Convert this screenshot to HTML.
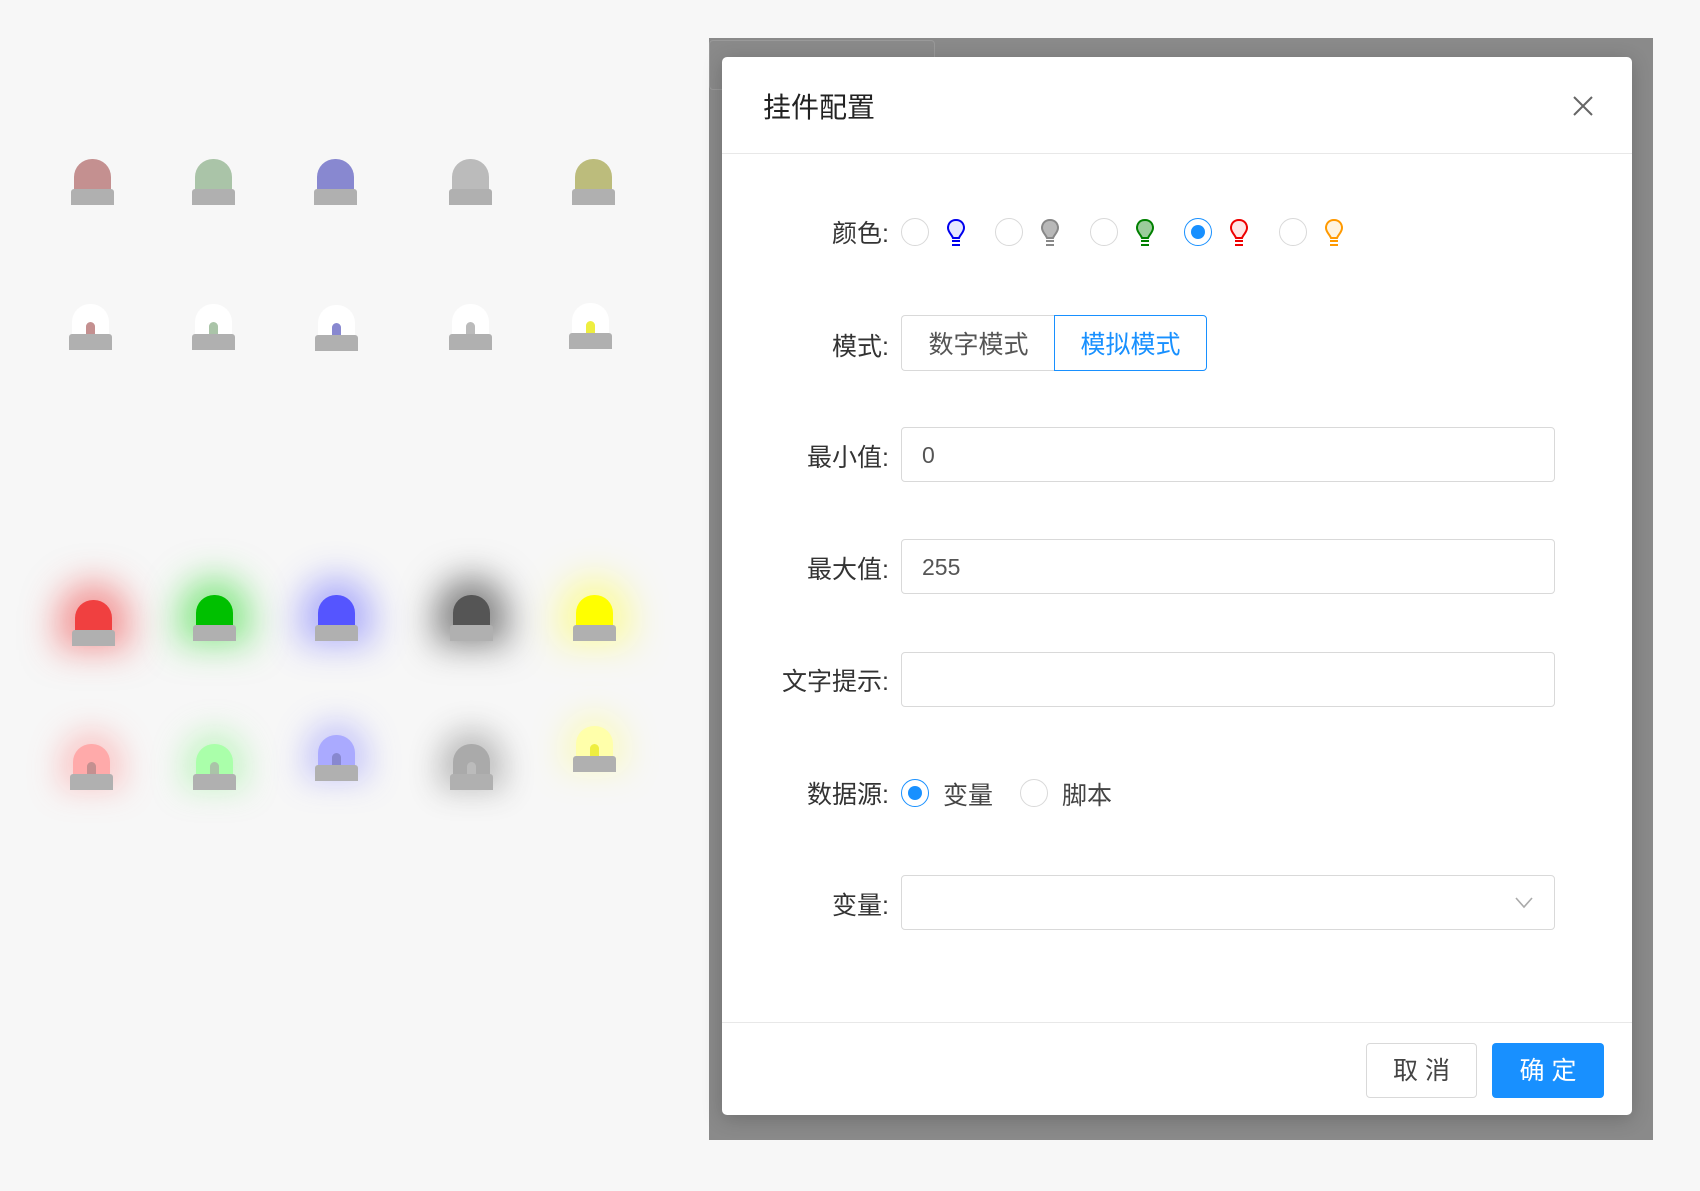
<!DOCTYPE html>
<html><head><meta charset="utf-8"><style>
*{margin:0;padding:0;box-sizing:border-box}
body{width:1700px;height:1191px;background:#f7f7f7;position:relative;overflow:hidden;font-family:"Liberation Sans","Noto Sans CJK SC",sans-serif;color:#333}
.l{position:absolute;width:43px;height:46px}
.l .d{position:absolute;left:3px;top:0;width:37px;height:32px;border-radius:18px 18px 0 0}
.l .b{position:absolute;left:0;top:30px;width:43px;height:16px;background:#b0b0b0;border-radius:3px 3px 0 0}
.l .s{position:absolute;left:17px;top:18px;width:9px;height:12px;border-radius:5px 5px 0 0}
.ov{position:absolute;left:709px;top:38px;width:944px;height:1102px;background:#8a8a8a}
.modal{position:absolute;left:722px;top:57px;width:910px;height:1058px;background:#fff;border-radius:5px;box-shadow:0 4px 20px rgba(0,0,0,.2)}
.lab{position:absolute;right:calc(1700px - 889px);font-size:25px;color:#333;text-align:right;white-space:nowrap}
.inp{position:absolute;left:901px;width:654px;height:55px;border:1px solid #d9d9d9;border-radius:4px;font-size:23px;color:#555;padding:14px 20px;background:#fff}
.rad{position:absolute;width:28px;height:28px;border:1px solid #d9d9d9;border-radius:50%;background:#fff}
.rad.on{border-color:#1890ff}
.rad.on::after{content:"";position:absolute;left:6px;top:6px;width:14px;height:14px;border-radius:50%;background:#1890ff}
.bulb{position:absolute;width:22px;height:30px}
</style></head><body>

<div class="l" style="left:71px;top:159px"><div class="d" style="background:#c49090"></div><div class="b"></div></div>
<div class="l" style="left:192px;top:159px"><div class="d" style="background:#aac4a8"></div><div class="b"></div></div>
<div class="l" style="left:314px;top:159px"><div class="d" style="background:#8888d0"></div><div class="b"></div></div>
<div class="l" style="left:449px;top:159px"><div class="d" style="background:#bbb"></div><div class="b"></div></div>
<div class="l" style="left:572px;top:159px"><div class="d" style="background:#bcbc7c"></div><div class="b"></div></div>

<div class="l" style="left:69px;top:304px"><div class="d" style="background:#fff"></div><div class="s" style="background:#c49090"></div><div class="b"></div></div>
<div class="l" style="left:192px;top:304px"><div class="d" style="background:#fff"></div><div class="s" style="background:#aac4a8"></div><div class="b"></div></div>
<div class="l" style="left:315px;top:305px"><div class="d" style="background:#fff"></div><div class="s" style="background:#8888d0"></div><div class="b"></div></div>
<div class="l" style="left:449px;top:304px"><div class="d" style="background:#fff"></div><div class="s" style="background:#bbb"></div><div class="b"></div></div>
<div class="l" style="left:569px;top:303px"><div class="d" style="background:#fff"></div><div class="s" style="background:#eeee40"></div><div class="b"></div></div>

<div class="l" style="left:72px;top:600px"><div class="d" style="background:#f04040;box-shadow:0 0 34px 18px rgba(240,60,60,.5)"></div><div class="b"></div></div>
<div class="l" style="left:193px;top:595px"><div class="d" style="background:#00c000;box-shadow:0 0 34px 18px rgba(40,220,40,.5)"></div><div class="b"></div></div>
<div class="l" style="left:315px;top:595px"><div class="d" style="background:#5555ff;box-shadow:0 0 34px 18px rgba(90,90,255,.45)"></div><div class="b"></div></div>
<div class="l" style="left:450px;top:595px"><div class="d" style="background:#555;box-shadow:0 0 34px 18px rgba(40,40,40,.55)"></div><div class="b"></div></div>
<div class="l" style="left:573px;top:595px"><div class="d" style="background:#ffff00;box-shadow:0 0 34px 18px rgba(255,255,80,.5)"></div><div class="b"></div></div>

<div class="l" style="left:70px;top:744px"><div class="d" style="background:#ffaaaa;box-shadow:0 0 30px 14px rgba(255,120,120,.35)"></div><div class="s" style="background:#c49090"></div><div class="b"></div></div>
<div class="l" style="left:193px;top:744px"><div class="d" style="background:#aaffaa;box-shadow:0 0 30px 14px rgba(120,240,120,.35)"></div><div class="s" style="background:#aac4a8"></div><div class="b"></div></div>
<div class="l" style="left:315px;top:735px"><div class="d" style="background:#aaaaff;box-shadow:0 0 30px 14px rgba(120,120,255,.35)"></div><div class="s" style="background:#8888d0"></div><div class="b"></div></div>
<div class="l" style="left:450px;top:744px"><div class="d" style="background:#aaa;box-shadow:0 0 30px 14px rgba(60,60,60,.3)"></div><div class="s" style="background:#bbb"></div><div class="b"></div></div>
<div class="l" style="left:573px;top:726px"><div class="d" style="background:#ffffaa;box-shadow:0 0 30px 14px rgba(255,255,120,.35)"></div><div class="s" style="background:#eeee40"></div><div class="b"></div></div>

<div class="ov"></div>
<div style="position:absolute;left:709px;top:40px;width:226px;height:50px;border:1px solid #999;border-radius:4px"></div>

<div class="modal">
  <div style="position:absolute;left:41px;top:29px;font-size:28px;color:#222">挂件配置</div>
  <svg style="position:absolute;left:850px;top:38px" width="22" height="22" viewBox="0 0 22 22"><path d="M2 2L20 20M20 2L2 20" stroke="#666" stroke-width="2" fill="none"/></svg>
  <div style="position:absolute;left:0;top:96px;width:100%;height:1px;background:#e8e8e8"></div>
  <div style="position:absolute;left:0;top:965px;width:100%;height:1px;background:#e8e8e8"></div>
</div>

<div class="lab" style="top:214px">颜色:</div>
<div class="rad" style="left:901px;top:218px"></div>
<div class="rad" style="left:995px;top:218px"></div>
<div class="rad" style="left:1090px;top:218px"></div>
<div class="rad on" style="left:1184px;top:218px"></div>
<div class="rad" style="left:1279px;top:218px"></div>
<svg class="bulb" style="left:945px;top:218px" viewBox="0 0 22 30"><path d="M11 2C5.5 2 3 6 3 10c0 4 4 7 5 10h6c1-3 5-6 5-10 0-4-2.5-8-8-8z" fill="#e6e8ff" stroke="#0000ee" stroke-width="2"/><path d="M7 23h8M7 27h8" stroke="#0000ee" stroke-width="2"/></svg>
<svg class="bulb" style="left:1039px;top:218px" viewBox="0 0 22 30"><path d="M11 2C5.5 2 3 6 3 10c0 4 4 7 5 10h6c1-3 5-6 5-10 0-4-2.5-8-8-8z" fill="#b8b8b8" stroke="#888" stroke-width="2"/><path d="M7 23h8M7 27h8" stroke="#888" stroke-width="2"/></svg>
<svg class="bulb" style="left:1134px;top:218px" viewBox="0 0 22 30"><path d="M11 2C5.5 2 3 6 3 10c0 4 4 7 5 10h6c1-3 5-6 5-10 0-4-2.5-8-8-8z" fill="#9ccc9c" stroke="#008000" stroke-width="2"/><path d="M7 23h8M7 27h8" stroke="#008000" stroke-width="2"/></svg>
<svg class="bulb" style="left:1228px;top:218px" viewBox="0 0 22 30"><path d="M11 2C5.5 2 3 6 3 10c0 4 4 7 5 10h6c1-3 5-6 5-10 0-4-2.5-8-8-8z" fill="#ffe6e6" stroke="#ee0000" stroke-width="2"/><path d="M7 23h8M7 27h8" stroke="#ee0000" stroke-width="2"/></svg>
<svg class="bulb" style="left:1323px;top:218px" viewBox="0 0 22 30"><path d="M11 2C5.5 2 3 6 3 10c0 4 4 7 5 10h6c1-3 5-6 5-10 0-4-2.5-8-8-8z" fill="#fff4e0" stroke="#ff9900" stroke-width="2"/><path d="M7 23h8M7 27h8" stroke="#ff9900" stroke-width="2"/></svg>

<div class="lab" style="top:327px">模式:</div>
<div style="position:absolute;left:901px;top:315px;width:154px;height:56px;border:1px solid #d9d9d9;border-right:none;border-radius:4px 0 0 4px;font-size:25px;color:#555;text-align:center;line-height:58px">数字模式</div>
<div style="position:absolute;left:1054px;top:315px;width:153px;height:56px;border:1px solid #1890ff;border-radius:0 4px 4px 0;font-size:25px;color:#1890ff;text-align:center;line-height:58px">模拟模式</div>

<div class="lab" style="top:438px">最小值:</div>
<div class="inp" style="top:427px">0</div>
<div class="lab" style="top:550px">最大值:</div>
<div class="inp" style="top:539px">255</div>
<div class="lab" style="top:662px">文字提示:</div>
<div class="inp" style="top:652px"></div>

<div class="lab" style="top:775px">数据源:</div>
<div class="rad on" style="left:901px;top:779px"></div>
<div style="position:absolute;left:943px;top:776px;font-size:25px;color:#444">变量</div>
<div class="rad" style="left:1020px;top:779px"></div>
<div style="position:absolute;left:1062px;top:776px;font-size:25px;color:#444">脚本</div>

<div class="lab" style="top:886px">变量:</div>
<div class="inp" style="top:875px"></div>
<svg style="position:absolute;left:1515px;top:897px" width="18" height="12" viewBox="0 0 18 12"><path d="M1 1l8 9 8-9" stroke="#aaa" stroke-width="1.6" fill="none"/></svg>

<div style="position:absolute;left:1366px;top:1043px;width:111px;height:55px;border:1px solid #d9d9d9;border-radius:4px;font-size:25px;color:#444;text-align:center;line-height:55px;background:#fff">取 消</div>
<div style="position:absolute;left:1492px;top:1043px;width:112px;height:55px;background:#1890ff;border-radius:4px;font-size:25px;color:#fff;text-align:center;line-height:57px">确 定</div>
</body></html>
